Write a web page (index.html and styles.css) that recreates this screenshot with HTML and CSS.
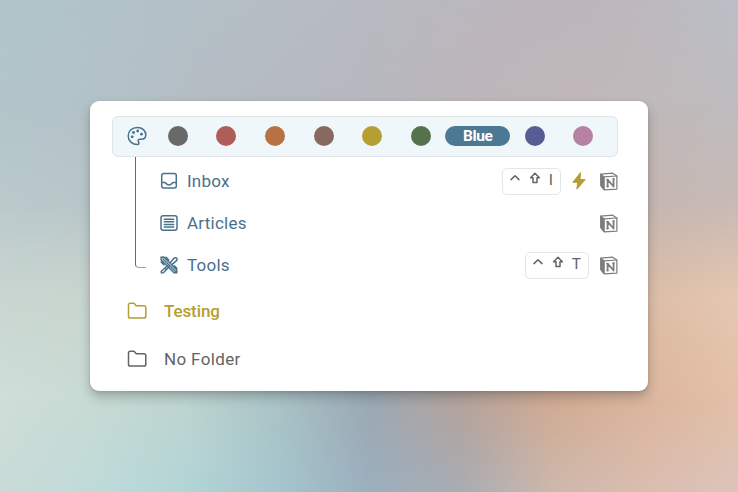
FILE: index.html
```
<!DOCTYPE html>
<html lang="en">
<head>
<meta charset="utf-8">
<title>Folders</title>
<link rel="stylesheet" href="styles.css">
</head>
<body>
<svg class="sprite" aria-hidden="true">
  <symbol id="folder" viewBox="0 0 20 20"><path d="M1.500 4.200c0-1.300.6-1.900 1.900-1.900h2.900c.8 0 1.200.2 1.700.9l1.200 1.500h7.700c1.300 0 1.900.6 1.900 1.900v8.600c0 1.300-.6 1.900-1.900 1.900H3.400c-1.300 0-1.900-.6-1.900-1.900z"/></symbol>
  <symbol id="notion" viewBox="0 0 19 20">
    <path d="M1 2.200 13.300 1.200 17.800 4.200v13.800L4.500 18.900 1 14.500z" fill="#fff" stroke-width="1.300"/>
    <path d="M1 2.200 4.500 5v13.900L1 14.500z" fill="currentColor" stroke-width="1"/>
    <path d="M4.500 5 17.800 4.200" stroke-width="1.300"/>
    <path class="monogram" d="M8 15.300V8l6.300 7.300V7.500" stroke-width="1.900"/>
    <path d="M6.800 8h1.800M7 15.400h2.200M13.200 7.400h2.200" stroke-width="1"/>
  </symbol>
  <symbol id="shift" viewBox="0 0 12 12"><path d="M6 1.200 1.600 5.800H4v4.600h4V5.800h2.400z"/></symbol>
  <symbol id="control" viewBox="0 0 12 12"><path d="M2 7.600 6 3.800l4 3.800"/></symbol>
</svg>
<div class="backdrop">
  <div class="band band-1"></div><div class="band band-2"></div><div class="band band-3"></div>
  <div class="band band-4"></div><div class="band band-5"></div><div class="band band-6"></div>
</div>
<main class="card">
  <div class="palette">
    <svg class="palette-icon" viewBox="0 0 20 20"><path d="M10.500 18.600C5.300 18.600 1.200 15 1.200 10S5.200 1.400 10.300 1.400 18.800 4.800 18.800 8.700c0 3.100-2 4.500-4.400 4.500h-1.500c-1.700 0-2.300 1.300-1.400 2.700.8 1.300.3 2.700-1 2.700z"/><g class="dots"><circle cx="5.200" cy="10.800" r="1.400"/><circle cx="6.500" cy="6.500" r="1.400"/><circle cx="10.700" cy="5" r="1.400"/><circle cx="14.500" cy="8.200" r="1.400"/></g></svg>
    <div class="swatches">
      <span class="swatch gray"></span><span class="swatch red"></span><span class="swatch orange"></span>
      <span class="swatch brown"></span><span class="swatch yellow"></span><span class="swatch green"></span>
      <span class="swatch blue">Blue</span><span class="swatch indigo"></span><span class="swatch pink"></span>
    </div>
  </div>
  <div class="tree">
    <div class="connector"></div>
    <div class="items">
      <div class="item">
        <svg class="item-icon" viewBox="0 0 18 18"><rect x="1.700" y="1.500" width="14.600" height="14.600" rx="2"/><path d="M1.700 10.500h3.300c1 0 1 2.500 4 2.500s3-2.500 4-2.500h3.300"/></svg>
        <span class="label">Inbox</span>
        <span class="keys"><svg class="key"><use href="#control"/></svg><svg class="key"><use href="#shift"/></svg><span class="letter">I</span></span>
        <svg class="bolt" viewBox="0 0 14 18"><path d="M8.300.8.900 10.300h4.700L4.900 17.200 13.100 7.600H8.300z"/></svg>
        <svg class="notion"><use href="#notion"/></svg>
      </div>
      <div class="item">
        <svg class="item-icon" viewBox="0 0 18 18"><rect x="1" y="1.700" width="16" height="14.600" rx="2.200"/><path d="M4.300 5.200h9.400M4.300 7.800h9.400M4.300 10.400h9.400M4.300 13h9.400"/></svg>
        <span class="label">Articles</span>
        <svg class="notion"><use href="#notion"/></svg>
      </div>
      <div class="item">
        <svg class="item-icon" viewBox="0 0 18 18"><path d="M1 1.200 3.800 1l13 13v2.800H14L1.200 4zM3 3l12.500 12.500M6 1.200l2.800 2.800M1.200 6l2.600 2.600M14.300 9.700l2.500 2.500M10.300 6.500l3.500-4c1.200-1.300 3-.8 3.200.5.200.8-.2 1.500-1 2.200l-4.200 3.500M7.500 9.700l-5.700 5c-1 1-.8 2.300.6 2.300.6 0 1-.3 1.500-.8l5-5.300M5 12l1.500 1.500"/></svg>
        <span class="label">Tools</span>
        <span class="keys"><svg class="key"><use href="#control"/></svg><svg class="key"><use href="#shift"/></svg><span class="letter">T</span></span>
        <svg class="notion"><use href="#notion"/></svg>
      </div>
    </div>
  </div>
  <div class="folder testing"><svg><use href="#folder"/></svg><span>Testing</span></div>
  <div class="folder"><svg><use href="#folder"/></svg><span>No Folder</span></div>
</main>
</body>
</html>
```
FILE: styles.css
```
* { box-sizing: border-box; }
body { margin: 0; width: 738px; height: 492px; overflow: hidden; display: flex; justify-content: center; padding-top: 100.500px; font-family: Roboto, "Liberation Sans", sans-serif; color: #646464; position: relative; }
svg { fill: none; stroke: currentColor; stroke-linecap: round; stroke-linejoin: round; flex: none; }
.sprite { display: none; }

/* Each band blends a horizontal color row into the row above it. */
.backdrop { position: absolute; inset: 0; z-index: -1; }
.band { position: absolute; inset: 0; }
.band-1 { background: linear-gradient(90deg, #b0c7ca, #b2c3ca, #b3c0c7, #b6bec4, #b8bac1, #bbb8bf, #bdb6bc, #bdb9be, #babfc6); }
.band-2 { background: linear-gradient(90deg, #b2c5ca, #b3c2c9, #b4bdc4, #b5bac1, #b7b8bf, #bcb6ba, #bfb7b9, #c0b9ba, #bebcbf); mask: linear-gradient(transparent 0, #000 100px); }
.band-3 { background: linear-gradient(90deg, #bac9cb, #b9c6c9, #b8c0c5, #b7bac0, #b9b8bc, #bfb6b5, #c4b5b2, #c5b6b2, #c7bab5); mask: linear-gradient(transparent 100px, #000 200px); }
.band-4 { background: linear-gradient(90deg, #c9d6d1, #c9d6cf, #bdcbc8, #abb5b8, #a8a8ad, #b9a9a2, #d2b19c, #ddbda6, #e5c8b0); mask: linear-gradient(transparent 200px, #000 300px); }
.band-5 { background: linear-gradient(90deg, #cfded8, #c8dbd4, #bfd5d0, #aac3c6, #9ba9b3, #b5a39c, #d1ab92, #dcb69d, #e3c0a8); mask: linear-gradient(transparent 300px, #000 400px); }
.band-6 { background: linear-gradient(90deg, #c9dbd7, #bfdad9, #b1d5d7, #a5c6cd, #9bafbe, #a8acb3, #ccb8ac, #dabdb0, #dbc4ba); mask: linear-gradient(transparent 400px, #000 492px); }

.card { width: 558px; height: 290.500px; padding: 15.500px 30px 0 22.500px; border-radius: 9px; background: #fff; box-shadow: 0 6px 11px rgba(40, 45, 50, .28), 0 1px 3px rgba(40, 45, 50, .14); }
.palette { height: 40.500px; width: 506px; margin-left: -.5px; border: 1.500px solid #e1e5e8; border-radius: 6px; background: #f0f7fb; display: flex; align-items: center; padding-left: 14px; color: #4a718c; }
.palette-icon { width: 20px; height: 20px; stroke-width: 1.500; }
.dots { fill: currentColor; stroke: none; }
.swatches { display: grid; grid-template-columns: repeat(6, 48.600px) 65.400px repeat(2, 48.600px); justify-items: center; margin-left: 6.500px; }
.swatch { width: 20px; height: 20px; border-radius: 10px; }
.gray { background: #696969; }
.red { background: #af5d57; }
.orange { background: #b77243; }
.brown { background: #886960; }
.yellow { background: #b59e32; }
.green { background: #54734d; }
.blue { background: #4c7894; width: 65px; color: #fff; font-size: 15.500px; font-weight: 700; line-height: 20px; letter-spacing: -.4px; text-align: center; }
.indigo { background: #575c92; }
.pink { background: #b781a2; }

.tree { display: flex; padding-left: 22.500px; height: 130px; color: #4a718c; }
.connector { width: 11px; height: 111px; border-left: 1px solid #4a718c; border-bottom: 1px solid #8ba8ba; border-bottom-left-radius: 4px; }
.items { width: 458px; margin-left: 14px; padding-top: 3.500px; }
.item { height: 42px; display: flex; align-items: center; }
.item-icon { width: 18px; height: 18px; stroke-width: 1.500; }
.label { margin: 0 auto 0 9px; font-size: 17px; letter-spacing: .25px; }
.keys { height: 27px; border: 1.500px solid #e5e5e5; border-radius: 5px; display: flex; align-items: center; gap: 8px; padding: 0 7px 2px 6px; color: #646464; margin-right: 11px; }
.key { width: 12px; height: 12px; stroke-width: 1.500; margin-bottom: 4px; }
.letter { font-size: 15.500px; line-height: 20px; }
.bolt { width: 14px; height: 18px; fill: #b59e32; stroke: #b59e32; margin-right: 14px; }
.notion { width: 18px; height: 19px; color: #7d7d7d; }
.folder { height: 48px; display: flex; align-items: center; padding-left: 14.500px; font-size: 17px; letter-spacing: .35px; }
.folder svg { width: 20px; height: 20px; stroke-width: 1.500; margin-right: 17px; }
.testing { color: #b59e32; font-weight: 500; letter-spacing: -.1px; }
```
